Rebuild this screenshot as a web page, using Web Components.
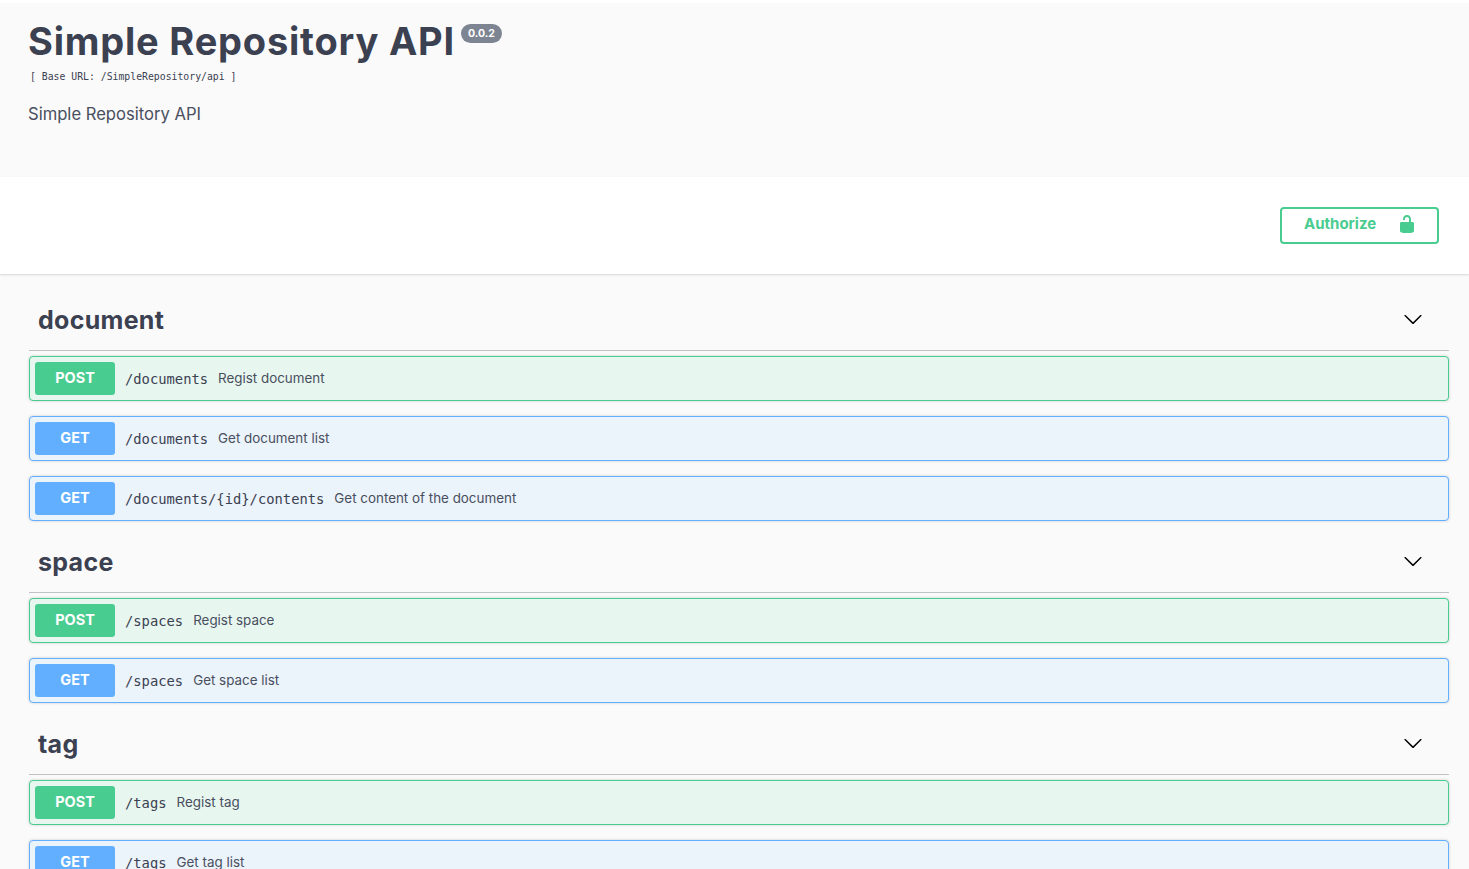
<!DOCTYPE html>
<html lang="en">
<head>
<meta charset="utf-8">
<title>Simple Repository API</title>
<style>
  html {overflow: hidden;}
  body {margin: 0; background: #fafafa; color: #3b4151; font-family: Inter, "Noto Sans", sans-serif;}
</style>
</head>
<body>
<api-info title-text="Simple Repository API" version="0.0.2" base-url="/SimpleRepository/api">Simple Repository API</api-info>
<auth-bar></auth-bar>
<api-main>
  <op-section name="document">
    <op-row method="post" path="/documents">Regist document</op-row>
    <op-row method="get" path="/documents">Get document list</op-row>
    <op-row method="get" path="/documents/{id}/contents">Get content of the document</op-row>
  </op-section>
  <op-section name="space">
    <op-row method="post" path="/spaces">Regist space</op-row>
    <op-row method="get" path="/spaces">Get space list</op-row>
  </op-section>
  <op-section name="tag">
    <op-row method="post" path="/tags">Regist tag</op-row>
    <op-row method="get" path="/tags">Get tag list</op-row>
  </op-section>
</api-main>

<script>
const LOCK_PATH = "M15.8 8H14V5.6C14 2.703 12.665 1 10 1 7.334 1 6 2.703 6 5.6V6h2v-.801C8 3.754 8.797 3 10 3c1.203 0 2 .754 2 2.199V8H4c-.553 0-1 .646-1 1.199V17c0 .549.428 1.139.951 1.307l1.197.387C5.672 18.861 6.55 19 7.1 19h5.8c.549 0 1.428-.139 1.951-.307l1.196-.387c.524-.167.953-.757.953-1.306V9.199C17 8.646 16.352 8 15.8 8z";
const CHEVRON_PATH = "M17.418 6.109c.272-.268.709-.268.979 0s.271.701 0 .969l-7.908 7.83c-.27.268-.707.268-.979 0l-7.908-7.83c-.27-.268-.27-.701 0-.969.271-.268.709-.268.979 0L10 13.25l7.418-7.141z";

class ApiInfo extends HTMLElement {
    constructor() {
        super();
        let shadowRoot = this.attachShadow({mode: "open"});
        shadowRoot.innerHTML = `
          <style>
            :host {display: block; height: 177px; background: #fafafa; border-top: 3px solid #fff; box-sizing: border-box; padding: 16px 20px 0 29px;}
            .title {display: flex; align-items: flex-start; height: 44px;}
            h1 {margin: 0 0 0 -1px; font-size: 38px; line-height: 44px; font-weight: 700; letter-spacing: .8px; color: #3b4151;}
            .badge {margin: 5px 0 0 6px; height: 19px; box-sizing: border-box; padding: 0 7px; border-radius: 57px; background: #7d8492; color: #fff; font: 700 10.5px/19px Inter, sans-serif;}
            .base {margin-top: 7px; font: 9.8px/14px "DejaVu Sans Mono", monospace; color: #3b4151; padding-left: 1px;}
            .desc {margin: 19px 0 0 -1px; font-size: 16.6px; line-height: 22px; color: #494f5e;}
          </style>
          <div class="title"><h1></h1><span class="badge"></span></div>
          <div class="base"></div>
          <div class="desc"><slot></slot></div>
        `;
        shadowRoot.querySelector("h1").textContent = this.getAttribute("title-text");
        shadowRoot.querySelector(".badge").textContent = this.getAttribute("version");
        shadowRoot.querySelector(".base").textContent = `[ Base URL: ${this.getAttribute("base-url")} ]`;
    }
}
customElements.define("api-info", ApiInfo);

class AuthBar extends HTMLElement {
    constructor() {
        super();
        let shadowRoot = this.attachShadow({mode: "open"});
        shadowRoot.innerHTML = `
          <style>
            :host {display: flex; justify-content: flex-end; align-items: flex-start; height: 97px; box-sizing: border-box; padding: 30px 30px 0 0; background: #fff; box-shadow: 0 1px 2px 0 rgba(0,0,0,.15);}
            button {display: flex; align-items: center; justify-content: space-between; width: 159px; height: 37px; box-sizing: border-box; padding: 0 20px 0 22px; border: 2px solid #49cc90; border-radius: 4px; background: transparent; color: #49cc90; font: 700 15px Inter, sans-serif;}
            span {padding-bottom: 4px;}
            svg {width: 20px; height: 20px; margin-bottom: 3px; fill: #49cc90;}
          </style>
          <button><span>Authorize</span><svg viewBox="0 0 20 20"><path d="${LOCK_PATH}"/></svg></button>
        `;
    }
}
customElements.define("auth-bar", AuthBar);

class ApiMain extends HTMLElement {
    constructor() {
        super();
        let shadowRoot = this.attachShadow({mode: "open"});
        shadowRoot.innerHTML = `
          <style>
            :host {display: block; padding: 20px 20px 0 29px;}
          </style>
          <slot></slot>
        `;
    }
}
customElements.define("api-main", ApiMain);

class OpSection extends HTMLElement {
    constructor() {
        super();
        let shadowRoot = this.attachShadow({mode: "open"});
        shadowRoot.innerHTML = `
          <style>
            :host {display: block;}
            header {display: flex; align-items: center; justify-content: space-between; height: 57px; box-sizing: border-box; margin-bottom: 5px; padding: 0 26px 6px 9px; border-bottom: 1px solid rgba(59,65,81,.3);}
            h4 {margin: 0; padding-top: 2px; font-size: 25px; line-height: 32px; font-weight: 700; letter-spacing: .3px; color: #3b4151;}
            svg {width: 20px; height: 20px; display: block;}
          </style>
          <header><h4></h4><svg viewBox="0 0 20 20"><path d="${CHEVRON_PATH}"/></svg></header>
          <slot></slot>
        `;
        shadowRoot.querySelector("h4").textContent = this.getAttribute("name");
    }
}
customElements.define("op-section", OpSection);

class OpRow extends HTMLElement {
    constructor() {
        super();
        let shadowRoot = this.attachShadow({mode: "open"});
        shadowRoot.innerHTML = `
          <style>
            :host {display: flex; align-items: center; height: 45px; box-sizing: border-box; margin-bottom: 15px; padding: 5px; border: 1px solid var(--c); border-radius: 4px; background: var(--bg); box-shadow: 0 0 3px rgba(0,0,0,.19);}
            :host([method="post"]) {--c: #49cc90; --bg: #e7f6ef;}
            :host([method="get"]) {--c: #61affe; --bg: #ebf3fb;}
            .method {width: 80px; height: 33px; flex: none; border-radius: 3px; background: var(--c); color: #fff; text-align: center; font: 700 14.5px/31px Inter, sans-serif; text-transform: uppercase;}
            .path {margin-left: 10px; padding-right: 10px; font: 13.8px/20px "DejaVu Sans Mono", monospace; color: #3b4151;}
            .summary {padding-bottom: 2px; font-size: 13.4px; line-height: 18px; color: #494f5e;}
          </style>
          <span class="method"></span><span class="path"></span><span class="summary"><slot></slot></span>
        `;
        shadowRoot.querySelector(".method").textContent = this.getAttribute("method");
        shadowRoot.querySelector(".path").textContent = this.getAttribute("path");
    }
}
customElements.define("op-row", OpRow);
</script>
</body>
</html>
